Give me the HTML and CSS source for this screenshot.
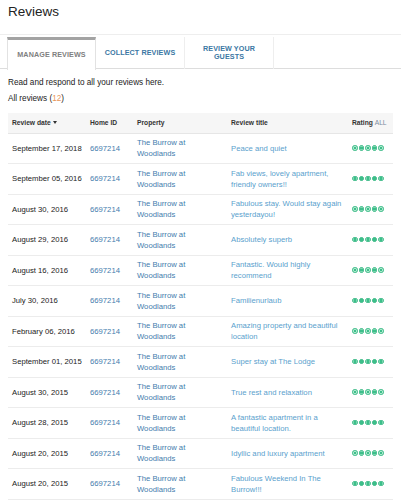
FILE: index.html
```html
<!DOCTYPE html>
<html>
<head>
<meta charset="utf-8">
<link rel="stylesheet" href="styles.css">
</head>
<body>
<h1 class="page-title">Reviews</h1>
<nav class="tabbar">
  <a class="tab active">MANAGE REVIEWS</a>
  <a class="tab">COLLECT REVIEWS</a>
  <a class="tab">REVIEW YOUR<br>GUESTS</a>
</nav>
<p class="intro">Read and respond to all your reviews here.</p>
<p class="count">All reviews (<span class="num">12</span>)</p>
<table class="reviews">
  <colgroup>
    <col class="c-date"><col class="c-id"><col class="c-prop"><col class="c-title"><col class="c-rate">
  </colgroup>
  <thead>
    <tr>
      <th>Review date <span class="caret"></span></th>
      <th>Home ID</th>
      <th>Property</th>
      <th>Review title</th>
      <th>Rating <span class="all">ALL</span></th>
    </tr>
  </thead>
  <tbody>
    <tr><td class="date">September 17, 2018</td><td class="lnk">6697214</td><td class="lnk">The Burrow at Woodlands</td><td class="ttl">Peace and quiet</td><td><span class="bubbles"><i></i><i></i><i></i><i></i><i></i></span></td></tr>
    <tr><td class="date">September 05, 2016</td><td class="lnk">6697214</td><td class="lnk">The Burrow at Woodlands</td><td class="ttl">Fab views, lovely apartment, friendly owners!!</td><td><span class="bubbles"><i></i><i></i><i></i><i></i><i></i></span></td></tr>
    <tr><td class="date">August 30, 2016</td><td class="lnk">6697214</td><td class="lnk">The Burrow at Woodlands</td><td class="ttl">Fabulous stay. Would stay again yesterdayou!</td><td><span class="bubbles"><i></i><i></i><i></i><i></i><i></i></span></td></tr>
    <tr><td class="date">August 29, 2016</td><td class="lnk">6697214</td><td class="lnk">The Burrow at Woodlands</td><td class="ttl">Absolutely superb</td><td><span class="bubbles"><i></i><i></i><i></i><i></i><i></i></span></td></tr>
    <tr><td class="date">August 16, 2016</td><td class="lnk">6697214</td><td class="lnk">The Burrow at Woodlands</td><td class="ttl">Fantastic. Would highly recommend</td><td><span class="bubbles"><i></i><i></i><i></i><i></i><i></i></span></td></tr>
    <tr><td class="date">July 30, 2016</td><td class="lnk">6697214</td><td class="lnk">The Burrow at Woodlands</td><td class="ttl">Familienurlaub</td><td><span class="bubbles"><i></i><i></i><i></i><i></i><i></i></span></td></tr>
    <tr><td class="date">February 06, 2016</td><td class="lnk">6697214</td><td class="lnk">The Burrow at Woodlands</td><td class="ttl">Amazing property and beautiful location</td><td><span class="bubbles"><i></i><i></i><i></i><i></i><i></i></span></td></tr>
    <tr><td class="date">September 01, 2015</td><td class="lnk">6697214</td><td class="lnk">The Burrow at Woodlands</td><td class="ttl">Super stay at The Lodge</td><td><span class="bubbles"><i></i><i></i><i></i><i></i><i></i></span></td></tr>
    <tr><td class="date">August 30, 2015</td><td class="lnk">6697214</td><td class="lnk">The Burrow at Woodlands</td><td class="ttl">True rest and relaxation</td><td><span class="bubbles"><i></i><i></i><i></i><i></i><i></i></span></td></tr>
    <tr><td class="date">August 28, 2015</td><td class="lnk">6697214</td><td class="lnk">The Burrow at Woodlands</td><td class="ttl">A fantastic apartment in a beautiful location.</td><td><span class="bubbles"><i></i><i></i><i></i><i></i><i></i></span></td></tr>
    <tr><td class="date">August 20, 2015</td><td class="lnk">6697214</td><td class="lnk">The Burrow at Woodlands</td><td class="ttl">Idyllic and luxury apartment</td><td><span class="bubbles"><i></i><i></i><i></i><i></i><i></i></span></td></tr>
    <tr><td class="date">August 20, 2015</td><td class="lnk">6697214</td><td class="lnk">The Burrow at Woodlands</td><td class="ttl">Fabulous Weekend In The Burrow!!!</td><td><span class="bubbles"><i></i><i></i><i></i><i></i><i></i></span></td></tr>
  </tbody>
</table>
</body>
</html>
```
FILE: styles.css
```css
* { box-sizing: border-box; }
html, body { background: #fff; }
body {
  margin: 0;
  padding: 4px 8px 0;
  font-family: "Liberation Sans", Arial, sans-serif;
  color: #222;
}
.page-title {
  margin: 0;
  font-size: 13.5px;
  font-weight: normal;
  line-height: 16px;
  color: #222;
}
.tabbar {
  display: flex;
  margin: 14px -8px 0;
  padding: 2px 0 0 7px;
  border-top: 1px solid #eeeeee;
  border-bottom: 1px solid #dddddd;
  height: 35px;
}
.tab {
  width: 89px;
  height: 32px;
  display: flex;
  align-items: center;
  justify-content: center;
  text-align: center;
  font-size: 7.2px;
  line-height: 8px;
  font-weight: bold;
  color: #3b77a3;
  border-right: 1px solid #eeeeee;
  letter-spacing: 0.1px;
}
.tab.active {
  color: #808080;
  border-top: 3px solid #a3a3a3;
  border-left: 1px solid #e2e2e2;
  border-right: 1px solid #e2e2e2;
  background: #fff;
  height: 33px;
  padding-bottom: 1px;
}
.intro {
  margin: 8px 0 0;
  font-size: 8.2px;
  line-height: 12px;
}
.count {
  margin: 4px 0 0;
  font-size: 8.2px;
  line-height: 12px;
}
.num { color: #e8965a; }
.reviews {
  margin-top: 8px;
  width: 385px;
  border-collapse: collapse;
  table-layout: fixed;
  font-size: 7.7px;
}
.c-date { width: 78px; }
.c-id { width: 47px; }
.c-prop { width: 94px; }
.c-title { width: 121px; }
.c-rate { width: 45px; }
.reviews th {
  background: #f6f6f6;
  height: 20px;
  text-align: left;
  font-size: 6.7px;
  font-weight: bold;
  color: #333;
  padding: 0 4px;
  white-space: nowrap;
  border-bottom: 1px solid #e6e6e6;
}
.caret {
  display: inline-block;
  width: 0; height: 0;
  border-left: 2.5px solid transparent;
  border-right: 2.5px solid transparent;
  border-top: 3px solid #333;
  vertical-align: 1px;
}
.all { font-weight: normal; color: #7a8ca0; }
.reviews td {
  height: 30.5px;
  padding: 0 8px 0 4px;
  line-height: 11px;
  border-bottom: 1px solid #ececec;
  vertical-align: middle;
  color: #222;
}
.reviews td.date { white-space: nowrap; padding-right: 0; }
.reviews td.lnk { color: #3f7cad; }
.reviews td.ttl { color: #5a9fcd; padding-right: 3px; }
.bubbles { display: inline-flex; gap: 1px; }
.bubbles i {
  display: block;
  width: 5.5px; height: 5.5px;
  border-radius: 50%;
  border: 1px solid #37b884;
  background: radial-gradient(circle, #3cbf8a 0 1.4px, #bff0d9 1.6px);
}
```
